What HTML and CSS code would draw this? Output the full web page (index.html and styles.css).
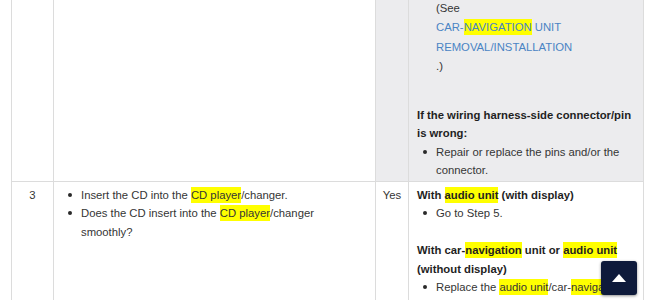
FILE: index.html
```html
<!DOCTYPE html>
<html lang="en">
<head>
<meta charset="utf-8">
<title>Troubleshooting</title>
<link rel="stylesheet" href="styles.css">
</head>
<body>
<table class="steps">
  <colgroup>
    <col class="c-step">
    <col class="c-check">
    <col class="c-yes">
    <col class="c-result">
  </colgroup>
  <tbody>
    <tr>
      <td class="step"></td>
      <td class="check"></td>
      <td class="answer shaded"></td>
      <td class="result shaded">
        <ul class="bullets continued">
          <li>
            <div class="ref">Replace the car-navigation unit.</div>
            <div class="ref">(See</div>
            <a class="ref link" href="#">CAR-<mark>NAVIGATION</mark> UNIT REMOVAL/INSTALLATION</a>
            <div class="ref">.)</div>
          </li>
        </ul>
        <p class="cond gap">If the wiring harness-side connector/pin is wrong:</p>
        <ul class="bullets">
          <li>Repair or replace the pins and/or the connector.</li>
        </ul>
      </td>
    </tr>
    <tr>
      <td class="step">3</td>
      <td class="check">
        <ul class="bullets">
          <li>Insert the CD into the <mark>CD player</mark>/changer.</li>
          <li>Does the CD insert into the <mark>CD player</mark>/changer smoothly?</li>
        </ul>
      </td>
      <td class="answer">Yes</td>
      <td class="result">
        <p class="cond">With <mark>audio unit</mark> (with display)</p>
        <ul class="bullets">
          <li>Go to Step 5.</li>
        </ul>
        <p class="cond blank">With car-<mark>navigation</mark> unit or <mark>audio unit</mark> (without display)</p>
        <ul class="bullets">
          <li>Replace the <mark>audio unit</mark>/car-<mark>navigation</mark> unit.</li>
        </ul>
      </td>
    </tr>
  </tbody>
</table>
<a class="to-top" href="#" aria-label="Back to top">
  <svg width="14" height="8" viewBox="0 0 14 8"><path d="M7 0 L14 8 L0 8 Z" fill="#ffffff"/></svg>
</a>
</body>
</html>
```

FILE: styles.css
```css
html, body {
  margin: 0;
  padding: 0;
  background: #ffffff;
  overflow: hidden;
}

body {
  font-family: "Liberation Sans", Arial, sans-serif;
  font-size: 11.3px;
  line-height: 18.5px;
  color: #353535;
}

.steps {
  margin: -26px 0 0 11px;
  width: 632px;
  table-layout: fixed;
  border-collapse: collapse;
}

.c-step { width: 42px; }
.c-check { width: 322px; }
.c-yes { width: 33px; }
.c-result { width: 235px; }

.steps td {
  border: 1px solid #dcdcdc;
  vertical-align: top;
  padding: 4px 8px 1px 8px;
}

.steps .step,
.steps .answer {
  text-align: center;
  padding-left: 2px;
  padding-right: 2px;
}

.shaded {
  background: #ececee;
}

.bullets {
  margin: 0;
  padding-left: 19px;
  list-style: none;
}

.bullets li::before {
  content: "";
  display: inline-block;
  width: 4px;
  height: 4px;
  border-radius: 50%;
  background: #2a2a2a;
  margin-left: -13px;
  margin-right: 9px;
  vertical-align: 2px;
}

.bullets.continued li::before {
  display: none;
}

.ref {
  display: block;
  line-height: 19.6px;
}

.link {
  color: #4a84c4;
  text-decoration: none;
}

.cond {
  margin: 0;
  font-weight: 700;
  color: #1f1f1f;
}

.gap {
  margin-top: 29px;
}

.blank {
  margin-top: 18.5px;
}

mark {
  background: #ffff00;
  color: inherit;
  padding: 2px 0;
}

.to-top {
  position: fixed;
  right: 13px;
  bottom: 5px;
  width: 36px;
  height: 34px;
  border-radius: 3px;
  background: #0e1a3b;
  box-shadow: 0 1px 3px rgba(0, 0, 0, 0.45);
  display: flex;
  align-items: center;
  justify-content: center;
}
```
